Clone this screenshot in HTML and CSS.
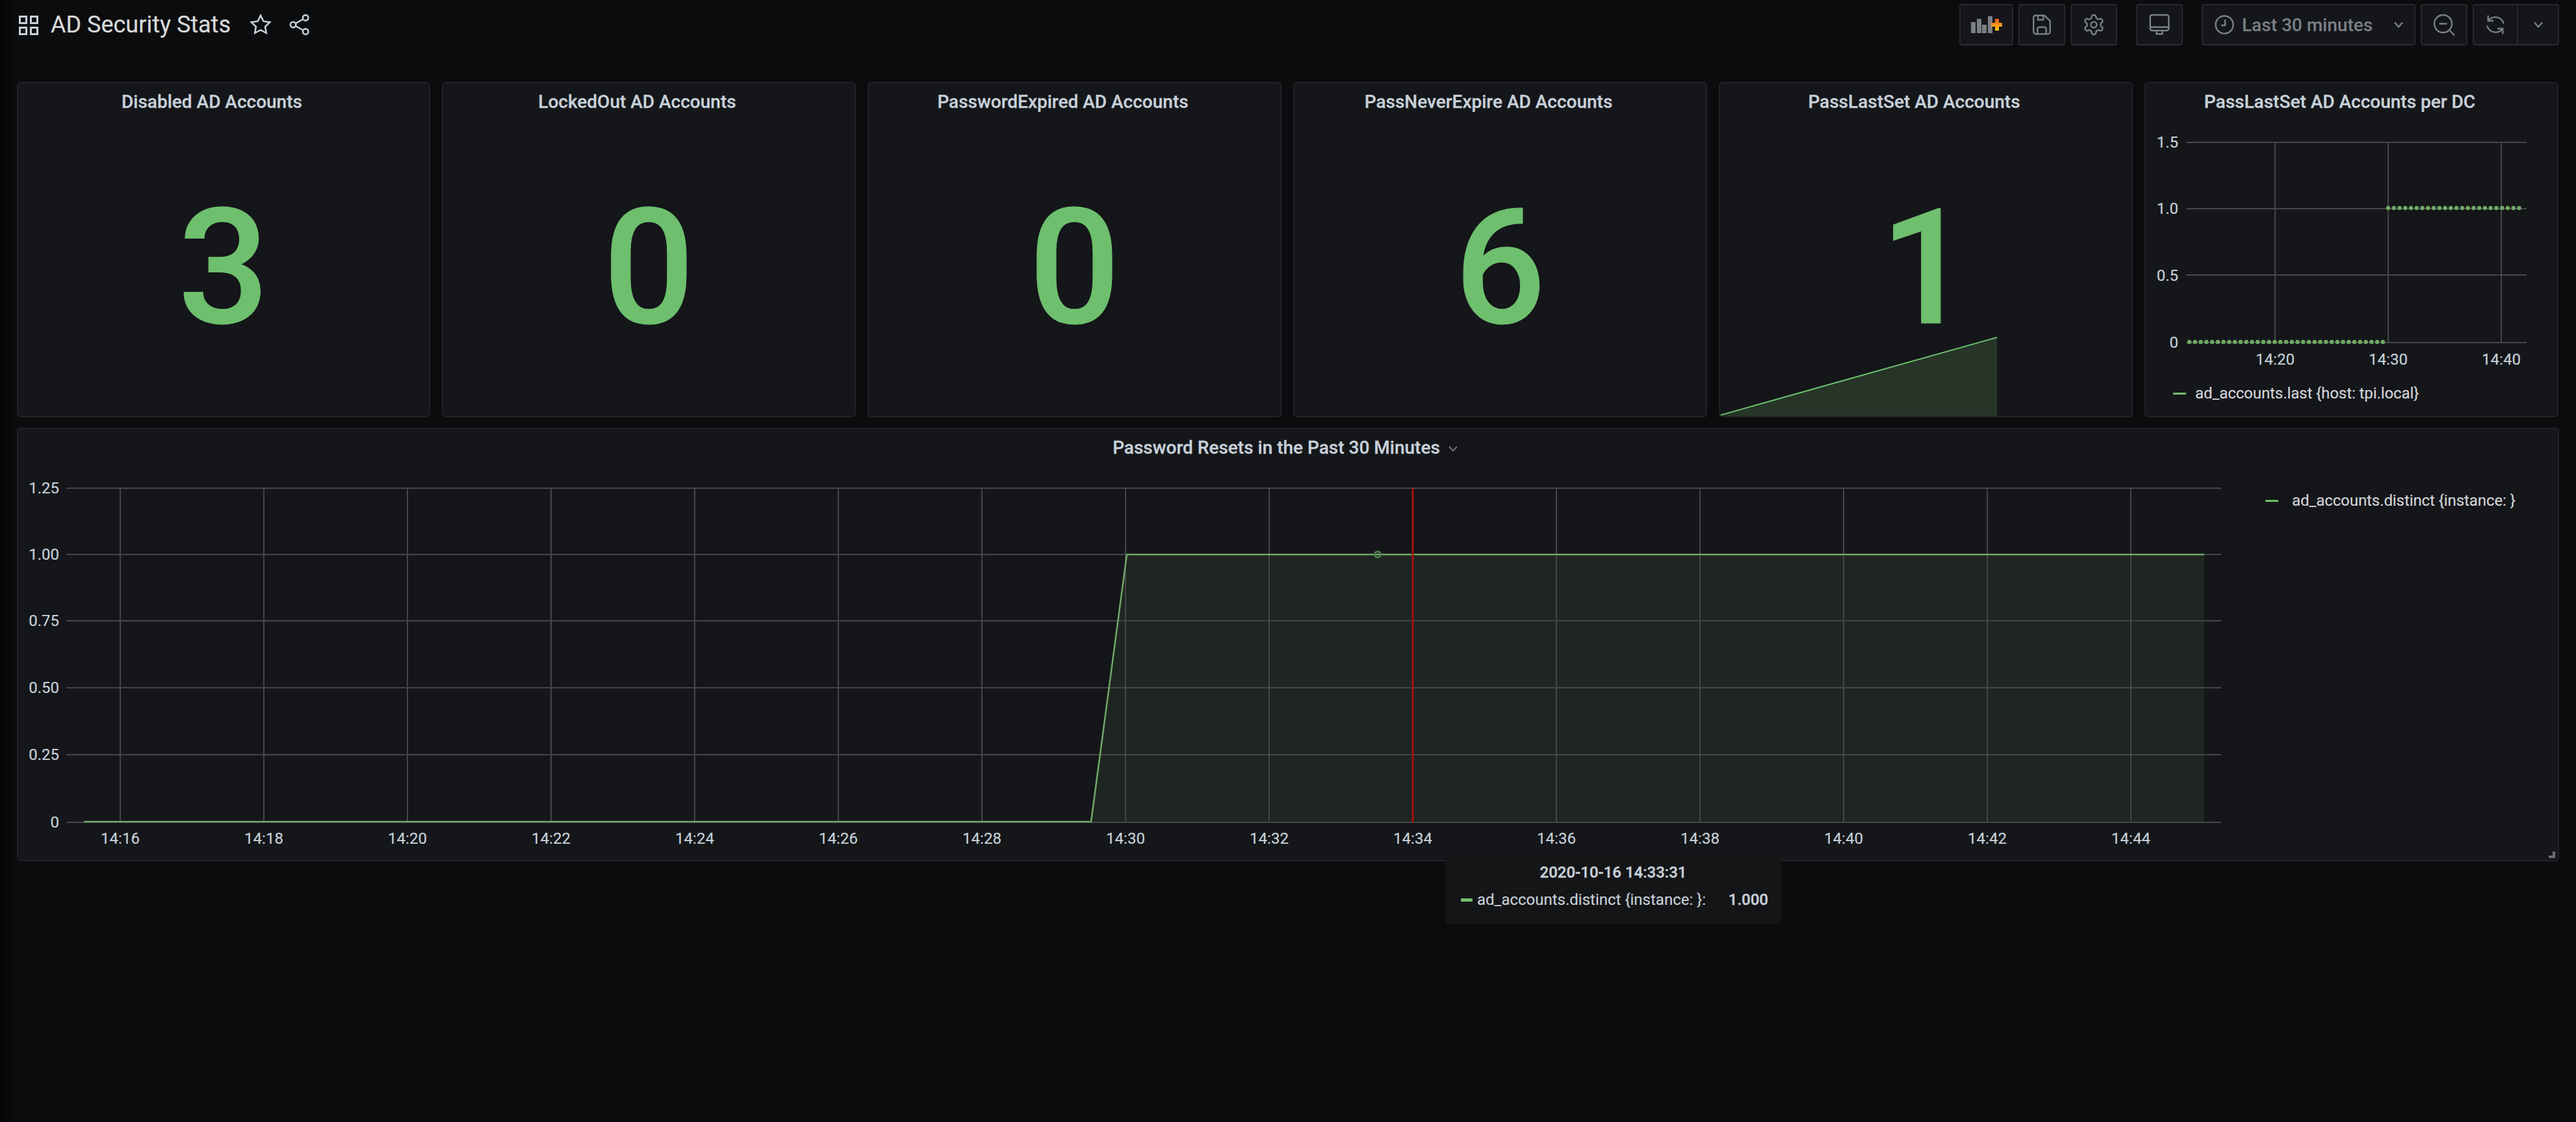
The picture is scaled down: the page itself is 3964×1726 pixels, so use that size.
FILE: index.html
```html
<!DOCTYPE html>
<html lang="en">
<head>
<meta charset="utf-8">
<title>AD Security Stats</title>
<link rel="stylesheet" href="styles.css">
</head>
<body>
<header class="topbar">
  <div class="crumb">
    <svg class="ico-grid" viewBox="0 0 30 30"><rect x="1.5" y="1.5" width="10" height="10"/><rect x="18.5" y="1.5" width="10" height="10"/><rect x="1.5" y="18.5" width="10" height="10"/><rect x="18.5" y="18.5" width="10" height="10"/></svg>
    <h1 class="dash-title">AD Security Stats</h1>
    <svg class="ico-head star" viewBox="0 0 24 24"><polygon points="12 2 15.09 8.26 22 9.27 17 14.14 18.18 21.02 12 17.77 5.82 21.02 7 14.14 2 9.27 8.91 8.26"/></svg>
    <svg class="ico-head" viewBox="0 0 24 24"><circle cx="18.5" cy="4.5" r="3"/><circle cx="5" cy="12" r="3"/><circle cx="18.5" cy="19.5" r="3"/><path d="M7.7 10.5 15.9 6M7.7 13.5 15.9 18"/></svg>
  </div>
  <div class="tools">
    <div class="tool-group">
      <button class="btn btn-add">
        <svg class="ico-add" viewBox="0 0 48 26"><defs><linearGradient id="org" x1="0" y1="0" x2="0" y2="1"><stop offset="0" stop-color="#f05a28"/><stop offset="1" stop-color="#fbca0a"/></linearGradient></defs><g class="bars"><rect x="0" y="9" width="7" height="17"/><rect x="9" y="4" width="7" height="22"/><rect x="17" y="13" width="7" height="13"/><rect x="26" y="0" width="7" height="26"/></g><path fill="url(#org)" d="M37 4h6v6h5v6h-5v6h-6v-6h-6v-6h6z"/></svg>
      </button>
      <button class="btn btn-icon"><svg class="ico" viewBox="0 0 24 24"><path d="M5.500 2.500h9L20.500 8v11a2.500 2.500 0 0 1-2.500 2.500H6A2.500 2.500 0 0 1 3.500 19V4.500A2 2 0 0 1 5.500 2.500z"/><path d="M8 2.500V7h5.500V2.500M7.500 21.500v-5a2 2 0 0 1 2-2h5a2 2 0 0 1 2 2v5"/></svg></button>
      <button class="btn btn-icon"><svg class="ico" viewBox="0 0 24 24"><path d="M12.220 2h-.440a2 2 0 0 0-2 2v.180a2 2 0 0 1-1 1.730l-.430.250a2 2 0 0 1-2 0l-.150-.080a2 2 0 0 0-2.730.730l-.220.380a2 2 0 0 0 .730 2.730l.150.100a2 2 0 0 1 1 1.720v.510a2 2 0 0 1-1 1.740l-.150.090a2 2 0 0 0-.730 2.730l.220.380a2 2 0 0 0 2.730.730l.150-.080a2 2 0 0 1 2 0l.430.250a2 2 0 0 1 1 1.730V20a2 2 0 0 0 2 2h.440a2 2 0 0 0 2-2v-.180a2 2 0 0 1 1-1.730l.430-.250a2 2 0 0 1 2 0l.150.080a2 2 0 0 0 2.730-.730l.220-.390a2 2 0 0 0-.730-2.730l-.150-.080a2 2 0 0 1-1-1.740v-.500a2 2 0 0 1 1-1.740l.150-.090a2 2 0 0 0 .730-2.730l-.220-.380a2 2 0 0 0-2.730-.730l-.150.080a2 2 0 0 1-2 0l-.430-.250a2 2 0 0 1-1-1.730V4a2 2 0 0 0-2-2z"/><circle cx="12" cy="12" r="3"/></svg></button>
    </div>
    <div class="tool-group">
      <button class="btn btn-icon"><svg class="ico" viewBox="0 0 24 24"><rect x="2.500" y="2" width="19" height="16" rx="2"/><path d="M2.500 14.500h19M9 18v3.500h6V18"/></svg></button>
    </div>
    <div class="tool-group">
      <button class="btn btn-time">
        <svg class="ico-clock" viewBox="0 0 30 30"><circle cx="15" cy="15" r="13.500"/><path d="M16 7v9h-6"/></svg>
        <span class="time-label">Last 30 minutes</span>
        <svg class="chev" viewBox="0 0 16 16"><path d="M2 4.500 8 11.500 14 4.500"/></svg>
      </button>
      <button class="btn btn-icon"><svg class="ico" viewBox="0 0 24 24"><circle cx="11" cy="11" r="9"/><path d="M7 11h8M18 18l4.500 5"/></svg></button>
      <div class="btn btn-split">
        <span class="split-main"><svg class="ico" viewBox="0 0 24 24"><path d="M4.500 2.500V8h5.500M4.500 8A9 9 0 0 1 20.500 11M19.500 21.500V16H14M19.500 16A9 9 0 0 1 3.500 13"/></svg></span>
        <span class="split-side"><svg class="chev" viewBox="0 0 16 16"><path d="M2 4.500 8 11.500 14 4.500"/></svg></span>
      </div>
    </div>
  </div>
</header>

<main class="board">
  <section class="stats">
    <article class="panel stat">
      <h2 class="panel-title">Disabled AD Accounts</h2>
      <div class="stat-value">3</div>
    </article>
    <article class="panel stat">
      <h2 class="panel-title">LockedOut AD Accounts</h2>
      <div class="stat-value">0</div>
    </article>
    <article class="panel stat">
      <h2 class="panel-title">PasswordExpired AD Accounts</h2>
      <div class="stat-value">0</div>
    </article>
    <article class="panel stat">
      <h2 class="panel-title">PassNeverExpire AD Accounts</h2>
      <div class="stat-value">6</div>
    </article>
    <article class="panel stat">
      <h2 class="panel-title">PassLastSet AD Accounts</h2>
      <div class="stat-value">1</div>
      <svg class="spark" viewBox="0 0 428 122"><polygon class="spark-fill" points="0,122 427,2 427,122"/><polyline class="spark-line" points="0,121 427,1"/></svg>
    </article>
    <article class="panel">
      <h2 class="panel-title">PassLastSet AD Accounts per DC</h2>
      <svg class="mini-plot" viewBox="0 0 633 400">
        <g class="grid">
          <path d="M61 35H585M61 137H585M61 239H585M61 343H585M198 35V343M372 35V343M546 35V343"/>
        </g>
        <line class="dots" x1="66" y1="342" x2="366" y2="342"/>
        <line class="dots" x1="372" y1="136" x2="576" y2="136"/>
        <g class="axis axis-y">
          <text x="49" y="43">1.5</text><text x="49" y="145">1.0</text><text x="49" y="248">0.5</text><text x="49" y="351">0</text>
        </g>
        <g class="axis axis-x">
          <text x="198" y="377">14:20</text><text x="372" y="377">14:30</text><text x="546" y="377">14:40</text>
        </g>
      </svg>
      <div class="legend legend-mini"><span class="swatch"></span><span>ad_accounts.last {host: tpi.local}</span></div>
    </article>
  </section>

  <article class="panel wide">
    <h2 class="panel-title panel-title-menu">Password Resets in the Past 30 Minutes<svg class="title-chev" viewBox="0 0 16 16"><path d="M2 5 8 11.500 14 5"/></svg></h2>
    <div class="wide-body">
      <svg class="main-plot" viewBox="0 0 3412 607">
        <polygon class="area" points="1651,549 1706,137 3364,137 3364,549"/>
        <g class="grid">
          <path d="M74 35H3390M74 137H3390M74 239H3390M74 342H3390M74 445H3390M74 549H3390"/>
          <path d="M157 35V549M378 35V549M599 35V549M820 35V549M1041 35V549M1262 35V549M1483 35V549M1704 35V549M1925 35V549M2367 35V549M2588 35V549M2809 35V549M3030 35V549M3251 35V549"/>
        </g>
        <polyline class="series" points="101,548 1651,548 1706,137 3364,137"/>
        <circle class="hover-pt" cx="2092" cy="137" r="4.500"/>
        <line class="cursor" x1="2146" y1="35" x2="2146" y2="549"/>
        <g class="axis axis-y">
          <text x="63" y="43">1.25</text><text x="63" y="145">1.00</text><text x="63" y="247">0.75</text><text x="63" y="350">0.50</text><text x="63" y="453">0.25</text><text x="63" y="557">0</text>
        </g>
        <g class="axis axis-x">
          <text x="157" y="582">14:16</text><text x="378" y="582">14:18</text><text x="599" y="582">14:20</text><text x="820" y="582">14:22</text><text x="1041" y="582">14:24</text><text x="1262" y="582">14:26</text><text x="1483" y="582">14:28</text><text x="1704" y="582">14:30</text><text x="1925" y="582">14:32</text><text x="2146" y="582">14:34</text><text x="2367" y="582">14:36</text><text x="2588" y="582">14:38</text><text x="2809" y="582">14:40</text><text x="3030" y="582">14:42</text><text x="3251" y="582">14:44</text>
        </g>
      </svg>
      <div class="legend legend-side"><span class="swatch"></span><span>ad_accounts.distinct {instance: }</span></div>
    </div>
    <span class="resize"></span>
  </article>
</main>

<aside class="tooltip">
  <div class="tip-time">2020-10-16 14:33:31</div>
  <div class="tip-row">
    <span class="tip-swatch"></span>
    <span class="tip-name">ad_accounts.distinct {instance: }:</span>
    <span class="tip-val">1.000</span>
  </div>
</aside>
</body>
</html>
```

FILE: styles.css
```css
* { box-sizing: border-box; }

html, body { margin: 0; height: 100%; }

body {
  position: relative;
  min-height: 1726px;
  overflow: hidden;
  background: linear-gradient(90deg, #040506 0, #0b0c0e 24px);
  color: #c7d0d9;
  font-family: Roboto, "Liberation Sans", sans-serif;
  font-size: 24px;
}

/* top bar */
.topbar {
  display: flex;
  align-items: center;
  justify-content: space-between;
  height: 76px;
  padding: 0 26px 0 29px;
  margin-bottom: 50px;
}

.crumb { display: flex; align-items: center; }

.ico-grid { width: 30px; height: 30px; fill: none; stroke: #c7d0d9; stroke-width: 3; margin-top: 2px; }

.dash-title {
  margin: 0 29px 0 19px;
  font-size: 36px;
  font-weight: 400;
  line-height: 44px;
  color: #d8d9da;
  -webkit-text-stroke: .2px #d8d9da;
}

.ico-head { width: 34px; height: 34px; fill: none; stroke: #c7d0d9; stroke-width: 1.800; margin-right: 26px; }
.star { margin-top: -1px; }

.tools { display: flex; gap: 29px; }
.tool-group { display: flex; gap: 8px; }

.btn {
  display: flex;
  align-items: center;
  justify-content: center;
  height: 64px;
  padding: 0;
  margin: 0;
  background: #141619;
  border: 2px solid #26282c;
  border-bottom-color: #2c2e33;
  border-radius: 4px;
  color: #7b8087;
  font: 500 28px Roboto, "Liberation Sans", sans-serif;
}

.btn-icon { width: 72px; }
.btn-add { width: 83px; }

.ico { width: 36px; height: 36px; fill: none; stroke: #7b8087; stroke-width: 1.600; }

.ico-add { width: 48px; height: 26px; margin-right: -1px; }
.bars { fill: #7b8087; }

.btn-time { width: 329px; justify-content: flex-start; padding-left: 18px; }
.ico-clock { width: 30px; height: 30px; fill: none; stroke: #7b8087; stroke-width: 2.400; flex: none; }
.time-label { margin-left: 12px; margin-right: 1px; }
.chev { width: 16px; height: 16px; fill: none; stroke: #7b8087; stroke-width: 2.400; }
.btn-time .chev { margin-left: 31px; }

.btn-split { width: 133px; justify-content: flex-start; }
.split-main { display: flex; align-items: center; justify-content: center; width: 68px; height: 100%; border-right: 2px solid #26282c; }
.split-side { display: flex; align-items: center; justify-content: center; width: 61px; }

/* dashboard */
.board { display: flex; flex-direction: column; gap: 16px; padding: 0 26px; }

.stats {
  display: grid;
  grid-template-columns: 636px repeat(5, 637px);
  gap: 18px;
  height: 516px;
}

.panel {
  position: relative;
  display: flex;
  flex-direction: column;
  min-width: 0;
  background: #141619;
  border: 2px solid #202226;
  border-radius: 6px;
  overflow: hidden;
}

.panel-title {
  display: flex;
  align-items: center;
  justify-content: center;
  flex: none;
  height: 56px;
  margin: 0;
  padding-right: 36px;
  font-size: 28px;
  font-weight: 500;
  color: #c7d0d9;
  -webkit-text-stroke: .3px #c7d0d9;
}

.panel-title-menu { padding-right: 0; }

.title-chev {
  width: 16px;
  height: 16px;
  margin: 4px 8px 0 12px;
  fill: none;
  stroke: #6e7177;
  stroke-width: 2;
}

.stat-value {
  display: flex;
  align-items: center;
  justify-content: center;
  flex: 1;
  font-size: 247px;
  font-weight: 500;
  line-height: 1;
  color: #6ebf6e;
  -webkit-text-stroke: 1px #6ebf6e;
}

.spark { position: absolute; left: -1px; bottom: 0; width: 428px; height: 122px; }
.spark-fill { fill: rgba(115, 191, 105, .19); }
.spark-line { fill: none; stroke: #6ebf6e; stroke-width: 2; }

.mini-plot { display: block; width: 633px; height: 400px; flex: none; margin-left: 1px; }

.grid path { fill: none; stroke: #44464a; stroke-width: 2; }

.dots {
  stroke: #6fa862;
  stroke-width: 6.500;
  stroke-linecap: round;
  stroke-dasharray: 0 8.760;
}

.axis text { font-size: 24px; fill: #c7d0d9; stroke: #c7d0d9; stroke-width: .2px; }
.axis-y text { text-anchor: end; }
.axis-x text { text-anchor: middle; }

.legend {
  display: flex;
  align-items: center;
  font-size: 24px;
  letter-spacing: -.08px;
  color: #d3d5d8;
  -webkit-text-stroke: .15px #d3d5d8;
}

.swatch { width: 20px; height: 3px; background: #73bf69; flex: none; }

.legend-mini { height: 42px; padding-left: 42px; gap: 14px; }

.wide { height: 667px; }
.wide-body { display: flex; flex: 1; }
.main-plot { display: block; width: 3412px; height: 607px; flex: none; }

.legend-side { align-self: flex-start; height: 40px; margin-top: 34px; padding-left: 46px; gap: 21px; }

.area { fill: rgba(142, 189, 114, .09); }
.series { fill: none; stroke: #6fa868; stroke-width: 2.500; }
.hover-pt { fill: none; stroke: #4f7a4e; stroke-width: 3; }
.cursor { stroke: #a80f14; stroke-width: 3; }

.resize {
  position: absolute;
  right: 4px;
  bottom: 3px;
  width: 10px;
  height: 10px;
  border-right: 4px solid #6b6d70;
  border-bottom: 4px solid #6b6d70;
}

/* hover tooltip */
.tooltip {
  position: absolute;
  left: 2224px;
  top: 1309px;
  width: 517px;
  height: 112px;
  padding: 18px 20px 0 24px;
  background: #141517;
  border-radius: 6px;
}

.tip-time { height: 30px; line-height: 30px; text-align: center; font-size: 24px; font-weight: 500; margin-left: -4px; -webkit-text-stroke: .4px #c7d0d9; }

.tip-row { display: flex; align-items: center; height: 30px; margin-top: 12px; font-size: 24px; }
.tip-swatch { width: 18px; height: 5px; border-radius: 1px; background: #73bf69; margin-right: 7px; flex: none; }
.tip-name { flex: 1; color: #c7d0d9; -webkit-text-stroke: .15px #c7d0d9; }
.tip-val { font-weight: 500; -webkit-text-stroke: .4px #c7d0d9; }
```
